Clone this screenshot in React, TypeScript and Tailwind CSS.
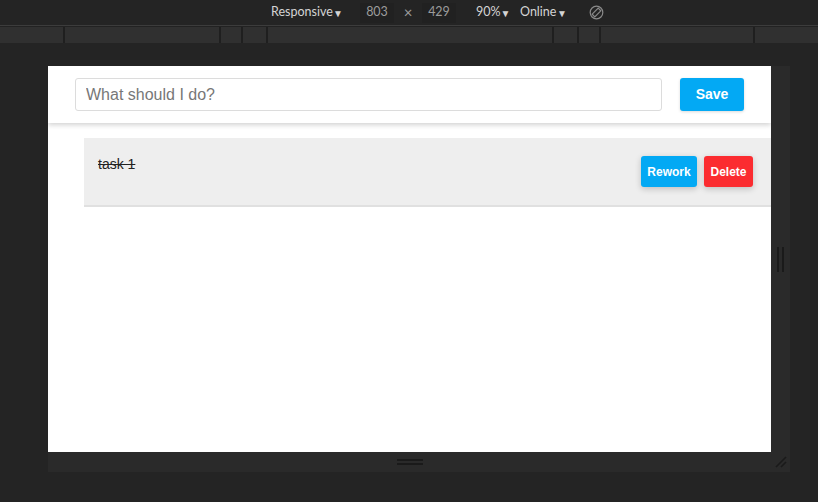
import React from 'react';

const rulerSegments = [63, 154, 20, 23, 284, 23, 20, 152, 63];

const Caret = () => <span className="text-[10px] leading-none">▼</span>;

const App: React.FC = () => {
  return (
    <div className="w-[818px] h-[502px] bg-[#242424] overflow-hidden font-['Lato','Open_Sans',sans-serif]">
      {/* devtools toolbar */}
      <div className="h-[25px] flex items-center text-[12.5px] text-[#d4d4d4]">
        <div className="ml-[271px] w-[72px] flex items-center justify-between">
          <span>Responsive</span>
          <Caret />
        </div>
        <div className="ml-[17px] w-[34px] h-[20px] flex items-center justify-center bg-[#212121] text-[#9c9c9c]">803</div>
        <div className="w-[28px] flex justify-center text-[#9c9c9c] text-[15px]">×</div>
        <div className="w-[34px] h-[20px] flex items-center justify-center bg-[#212121] text-[#9c9c9c]">429</div>
        <div className="ml-[20px] w-[34px] flex items-center justify-between">
          <span>90%</span>
          <Caret />
        </div>
        <div className="ml-[10px] w-[47px] flex items-center justify-between">
          <span>Online</span>
          <Caret />
        </div>
        <svg className="ml-[22px]" width="15" height="15" viewBox="0 0 15 15" fill="none" stroke="#8a8a8a" strokeWidth="1.2">
          <circle cx="7.5" cy="7.5" r="6.3" />
          <path d="M3.2 9.2 L9.2 3.2 L11.8 5.8 L5.8 11.8 Z" />
        </svg>
      </div>
      <div className="h-px bg-[#3c3c3c]" />
      <div className="h-px bg-[#222]" />
      {/* ruler */}
      <div className="h-[16px] flex gap-[2px] bg-[#1f1f1f]">
        {rulerSegments.map((w, i) => (
          <div key={i} className="h-full bg-[#303030]" style={{ width: w }} />
        ))}
      </div>

      {/* device frame */}
      <div className="mt-[23px] ml-[48px] w-[742px] h-[406px] bg-[#2a2a2a] grid grid-cols-[723px_19px] grid-rows-[386px_20px]">
        <div className="bg-white overflow-hidden font-['Liberation_Sans',Arial,sans-serif]">
          <header className="h-[57px] px-[27px] flex items-center gap-[18px] bg-white shadow-[0_2px_5px_rgba(0,0,0,0.18)] relative">
            <input
              type="text"
              placeholder="What should I do?"
              className="flex-1 h-[33px] px-[10px] border border-[#dcdcdc] rounded-[3px] text-[16px] text-[#333] placeholder:text-[#777] outline-none"
            />
            <button className="w-[64px] h-[33px] rounded-[3px] bg-[#03a9f4] text-white text-[14px] font-bold shadow-[0_1px_3px_rgba(0,0,0,0.15)]">
              Save
            </button>
          </header>

          <div className="mt-[15px] ml-[36px] h-[69px] bg-[#eeeeee] border-b-2 border-[#e0e0e0] flex items-center pl-[14px] pr-[18px]">
            <span className="self-start mt-[16px] text-[14px] text-[#222] line-through">task 1</span>
            <div className="ml-auto flex gap-[7px]">
              <button className="w-[56px] h-[31px] rounded-[3px] bg-[#03a9f4] text-white text-[12px] font-bold shadow-[0_2px_6px_rgba(0,0,0,0.2)]">
                Rework
              </button>
              <button className="w-[49px] h-[31px] rounded-[3px] bg-[#fb2c30] text-white text-[12px] font-bold shadow-[0_2px_6px_rgba(0,0,0,0.2)]">
                Delete
              </button>
            </div>
          </div>
        </div>

        {/* right resize handle */}
        <div className="flex items-center justify-center gap-[3px]">
          <div className="w-[2px] h-[25px] bg-[#1a1a1a]" />
          <div className="w-[2px] h-[25px] bg-[#1a1a1a]" />
        </div>

        {/* bottom resize handle */}
        <div className="flex flex-col items-center justify-center gap-[2px]">
          <div className="w-[26px] h-[2px] bg-[#1a1a1a]" />
          <div className="w-[26px] h-[2px] bg-[#1a1a1a]" />
        </div>

        {/* corner */}
        <div className="flex items-center justify-center">
          <svg width="12" height="12" viewBox="0 0 12 12" stroke="#1a1a1a" strokeWidth="1.6">
            <path d="M1 11 L11 1" />
            <path d="M6 11 L11 6" />
          </svg>
        </div>
      </div>
    </div>
  );
};

export default App;
